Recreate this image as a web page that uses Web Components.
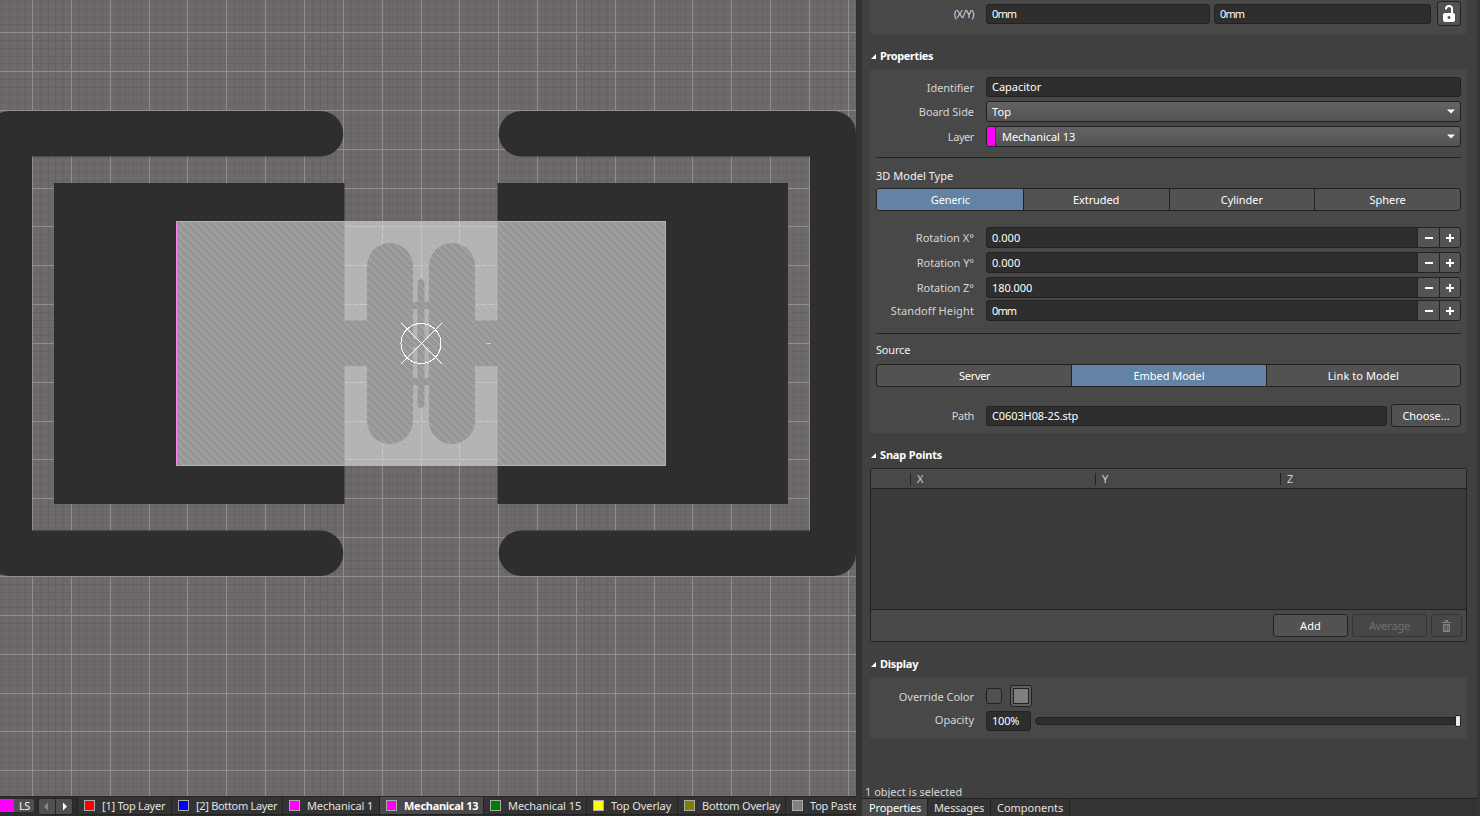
<!DOCTYPE html>
<html lang="en"><head><meta charset="utf-8"><title>PCB Library Editor</title>
<style>
html,body{margin:0;height:816px;overflow:hidden;background:#404040}
body{font:11px/14px "Noto Sans","Open Sans",sans-serif;color:#f2f2f2}
</style></head><body>
<eda-app>
  <pcb-canvas slot="canvas"></pcb-canvas>
  <layer-bar slot="layers">
    <layer-tab style="width:94px" color="#f00" w="63">[1] Top Layer</layer-tab>
    <layer-tab style="width:111px" color="#00f" w="81">[2] Bottom Layer</layer-tab>
    <layer-tab style="width:97px" color="#f0f" w="66">Mechanical 1</layer-tab>
    <layer-tab style="width:104px" color="#f0f" w="74" active>Mechanical 13</layer-tab>
    <layer-tab style="width:103px" color="#008000" w="73">Mechanical 15</layer-tab>
    <layer-tab style="width:91px" color="#ff0" w="60">Top Overlay</layer-tab>
    <layer-tab style="width:108px" color="#808000" w="78">Bottom Overlay</layer-tab>
    <layer-tab style="width:93px" color="#808080" w="48">Top Paste</layer-tab>
  </layer-bar>
  <props-panel slot="panel"></props-panel>
</eda-app>
<script>
const define=(name,html,init)=>customElements.define(name,class extends HTMLElement{
  connectedCallback(){
    if(this.shadowRoot)return;
    const root=this.attachShadow({mode:"open"}),t=document.createElement("template");
    t.innerHTML=typeof html==="function"?html(this):html;
    root.append(t.content.cloneNode(true));
    if(init)init(this,root);
  }
});
const a=(e,n,d="")=>e.getAttribute(n)??d;

define("eda-app",`<style>:host{display:grid;grid-template-columns:856px 624px;height:816px;overflow:hidden}
.left{display:flex;flex-direction:column;width:856px;overflow:hidden;min-width:0}</style>
<div class="left"><slot name="canvas"></slot><slot name="layers"></slot></div><slot name="panel"></slot>`);

/* label whose tracking is adjusted to a known advance width */
define("ui-text",`<style>:host{display:block;white-space:nowrap;line-height:14px}span{display:inline-block}:host([bold]){font-weight:700}</style><span><slot></slot></span>`,
(e,r)=>{const w=+a(e,"w",0);if(!w)return;const s=r.querySelector("span"),n=e.textContent.length,m=s.getBoundingClientRect().width;
 if(m>0)s.style.letterSpacing=((w+.2-m)/n).toFixed(3)+"px";});

define("pcb-canvas",()=>{
  let minor="",major="",hatch="",cross="";
  for(let k=-15;k<120;k++){
    const x=Math.round(32.1+38.84*k/5),y=Math.round(109.9+38.84*k/5),m=k%5===0;
    const p=(x>=0&&x<856?`M${x} 0h1v796h-1z`:"")+(y>=0&&y<796?`M0 ${y}h856v1H0z`:"");
    if(m)major+=p;else minor+=p;
  }
  for(let y=222;y<465;y++)for(let x=177+((y+7-177)%8+8)%8;x<665;x+=8)hatch+=`M${x} ${y}h1v1h-1z`;
  for(let i=0;i<=40;i++)cross+=`M${401+i} ${323+i}h1v1h-1zM${441-i} ${323+i}h1v1h-1z`;
  return `<style>:host{display:block;width:856px;height:796px;background:#6e6a69}svg{display:block}</style>
<svg width="856" height="796" viewBox="0 0 856 796">
<path fill="#656267" shape-rendering="crispEdges" d="${minor}"/><path fill="#918e8f" shape-rendering="crispEdges" d="${major}"/>
<g fill="#2e2e2e">
<path d="M9.500 111H320.500a22.500 22.500 0 0 1 0 45.500H32V530.500H320.500a22.500 22.500 0 0 1 0 45.500H9.500A22.500 22.500 0 0 1 -13 553.500V133.500A22.500 22.500 0 0 1 9.500 111z"/>
<path d="M833.500 111H521.500a22.500 22.500 0 0 0 0 45.500H810V530.500H521.500a22.500 22.500 0 0 0 0 45.500H833.500A22.500 22.500 0 0 0 856 553.500V133.500A22.500 22.500 0 0 0 833.500 111z"/>
<path d="M54 183H344.500V504H54zM497.500 183H788V504H497.500z"/>
<rect x="367" y="243" width="46" height="201" rx="23"/><rect x="429" y="243" width="46" height="201" rx="23"/>
<path d="M344 320.500h46v45.500h-46zM452 320.500h46v45.500h-46z"/>
<rect x="417.500" y="279" width="7" height="129" rx="3.500"/>
<path d="M412 302h18v7h-18zM412 339h18v8h-18zM412 378h18v7h-18z"/></g>
<path fill="#fff" fill-opacity=".5" d="M176 221h490v245H176z"/>
<path fill="#f77df7" shape-rendering="crispEdges" d="${hatch}"/>
<path fill="none" stroke="#ff7dff" d="M176.500 221.500h489v244h-489z"/>
<path fill="#d0d0d0" d="M486 343h5v1h-5z"/>
<path fill="#fff" shape-rendering="crispEdges" d="${cross}"/><circle cx="421" cy="343.500" r="20" fill="none" stroke="#fff" shape-rendering="crispEdges"/>
</svg>`});

define("layer-bar",`<style>:host{display:flex;height:20px;background:#2d2d2d;border-top:1px solid #262626;box-sizing:border-box;flex:none}
.sw{width:14px;height:13px;margin-top:2px;background:#f0f;flex:none}
.ls{width:20px;height:13px;margin-top:2px;padding-left:1px;box-sizing:border-box;background:#505050;border-radius:0 3px 3px 0;flex:none;display:flex;align-items:center;justify-content:center}
.ar{display:flex;flex:none;width:33px;height:15px;margin:1px 4px 0 4px;background:#505050;border:1px solid #262626;border-radius:3px}
svg{display:block}</style>
<div class="sw"></div><div class="ls"><ui-text w="11">LS</ui-text></div>
<div class="ar"><svg width="33" height="15"><path d="M9 3.500v8L5 7.500z" fill="#888"/><path d="M16 0h1v15h-1z" fill="#262626"/><path d="M24 3.500v8l4-4z" fill="#fff"/></svg></div><slot></slot>`);

define("layer-tab",e=>`<style>:host{display:flex;flex:none;height:18px;box-sizing:border-box;border-left:1px solid #222;border-bottom:1px solid #222;background:#333;padding-left:6px;color:#e2e2e2}
:host([active]){background:#4a4a4a;color:#fff}i{display:block;width:9px;height:9px;border:1px solid #aaa;margin:3px 7px 0 0;flex:none}
ui-text{margin-top:2px}</style><i style="background:${a(e,"color")}"></i><ui-text w="${a(e,"w")}" ${e.hasAttribute("active")?"bold":""}>${e.textContent}</ui-text>`);

define("ui-field",e=>`<style>:host{display:flex;align-items:center;box-sizing:border-box;height:20px;background:#2e2e2e;border:1px solid #222;border-radius:3px;padding-left:5px;flex:1;color:#fff}</style><ui-text w="${a(e,"w")}">${e.textContent}</ui-text>`);

define("ui-select",e=>`<style>:host{display:flex;align-items:center;box-sizing:border-box;height:21px;background:linear-gradient(#646464,#525252);border:1px solid #222;border-radius:3px;flex:1;overflow:hidden;color:#fff}
i{align-self:stretch;width:8px;background:#f0f;border-right:1px solid #222}ui-text{flex:1;margin-left:${e.hasAttribute("chip")?6:5}px}svg{margin-right:5px}</style>
${e.hasAttribute("chip")?"<i></i>":""}<ui-text w="${a(e,"w")}">${e.textContent}</ui-text><svg width="8" height="5"><path d="M0 .5h8L4 4.500z" fill="#fff"/></svg>`);

define("ui-spin",e=>`<style>:host{display:flex;box-sizing:border-box;height:21px;border:1px solid #222;border-radius:3px;background:#2e2e2e;flex:1;overflow:hidden;color:#fff}
ui-text{flex:1;padding:3px 0 0 5px}b{display:flex;align-items:center;justify-content:center;width:21px;border-left:1px solid #222;background:#545454}b+b{width:20px}</style>
<ui-text w="${a(e,"w")}">${e.textContent}</ui-text><b><svg width="8" height="8"><path d="M0 3h8v2H0z" fill="#fff"/></svg></b><b><svg width="8" height="8"><path d="M0 3h3V0h2v3h3v2H5v3H3V5H0z" fill="#fff"/></svg></b>`);

define("ui-button",`<style>:host{display:flex;align-items:center;justify-content:center;box-sizing:border-box;height:23px;border:1px solid #222;border-radius:3px;background:#525252;color:#fff;flex:none}
:host([off]){background:#474747;border-color:#353535;color:#707070}</style><slot></slot>`);

define("ui-segments",`<style>:host{display:flex;box-sizing:border-box;height:23px;border:1px solid #222;border-radius:3px;background:#525252;overflow:hidden;color:#fff}
::slotted(*){flex:1;text-align:center;padding-top:4px;border-left:1px solid #222}::slotted(:first-child){border-left:0;padding-left:1px}::slotted([on]){background:#6283a4}</style><slot></slot>`);

define("form-row",e=>`<style>:host{display:flex;align-items:flex-start}.l{width:98px;margin-right:12px;display:flex;justify-content:flex-end;flex:none;color:#d6d6d6;padding-top:${a(e,"dy","4")}px}</style>
<div class="l"><ui-text w="${a(e,"w")}">${a(e,"label")}</ui-text></div><slot></slot>`);

define("panel-heading",e=>`<style>:host{display:flex;align-items:center;height:14px;margin-left:9px;color:#fff}svg{margin-right:4px}</style><svg width="5" height="5"><path d="M5 0v5H0z" fill="#fff"/></svg><ui-text bold w="${a(e,"w")}">${e.textContent}</ui-text>`);

define("panel-box",`<style>:host{display:block;box-sizing:border-box;margin:0 10px 0 8px;padding:0 6px;background:#484848;border-radius:3px;overflow:hidden}</style><slot></slot>`);

define("snap-table",`<style>:host{display:flex;flex-direction:column;box-sizing:border-box;height:174px;margin:0 10px 0 8px;border:1px solid #222;border-radius:2px;background:#3a3a3a}
.h{display:flex;background:#484848;border-bottom:1px solid #222;border-top:1px solid #4e4e4e;height:18px;color:#d0d0d0}
.h div{flex:none;width:185px;display:flex;align-items:center}.h div:first-child{width:39px}.h div+div:before{content:"";width:1px;height:12px;background:#222;margin-right:6px}
.b{flex:1}.f{display:flex;justify-content:flex-end;align-items:center;gap:4px;height:31px;padding-right:4px;background:#484848;border-top:1px solid #222}</style>
<div class="h"><div></div><div><ui-text w="6">X</ui-text></div><div><ui-text w="5">Y</ui-text></div><div><ui-text w="6">Z</ui-text></div></div><div class="b"></div>
<div class="f"><ui-button style="width:75px"><ui-text w="21">Add</ui-text></ui-button><ui-button off style="width:75px"><ui-text w="41">Average</ui-text></ui-button>
<ui-button off style="width:31px"><svg width="9" height="12"><path fill="#858585" fill-rule="evenodd" d="M3 0h3v2h3v1H0V2h3zM4 1v1h1V1zM1 4h7v8H1zM2.500 5v5.500h1V5zM4.200 5v5.500h.8V5zM5.800 5v5.500h.8V5z"/></svg></ui-button></div>`);

define("opacity-slider",`<style>:host{display:flex;align-items:center;flex:1;height:12px;margin:4px 0 0 4px}
.t{flex:1;height:8px;box-sizing:border-box;background:#2e2e2e;border:1px solid #222;border-radius:4px 0 0 4px;display:flex;justify-content:space-evenly;align-items:flex-end;padding-left:5px}
.t i{width:2px;height:1px;background:#2b2b2b;margin-bottom:-2px}.k{width:6px;height:12px;box-sizing:border-box;background:#e8e8e8;border:1px solid #222;border-radius:2px;margin-left:-1px}</style><div class="t"><i></i><i></i><i></i></div><div class="k"></div>`);

define("dock-tabs",`<style>:host{display:flex;height:18px;box-sizing:border-box;border-top:1px solid #222;background:#333;color:#e2e2e2}
div{box-sizing:border-box;border-right:1px solid #222;display:flex;padding:2px 0 0 6px}.on{background:#4a4a4a;color:#fff;padding-left:7px}</style>
<div class="on" style="width:66px"><ui-text w="52">Properties</ui-text></div><div style="width:63px"><ui-text w="50">Messages</ui-text></div><div style="width:79px"><ui-text w="66">Components</ui-text></div>`);

define("props-panel",`<style>:host{display:flex;height:816px;overflow:hidden;background:#404040}
.g{width:6px;background:#333;flex:none}.r{width:3px;background:#353535;flex:none}.p{flex:1;display:flex;flex-direction:column;min-width:0}
.p>*{flex:none}hr{border:0;height:1px;background:#222;margin:0}.sw{box-sizing:border-box;width:16px;height:16px;border:1px solid #222;border-radius:3px;background:#505050;margin-top:3px}
.cs{box-sizing:border-box;width:22px;height:22px;border:1px solid #222;border-radius:3px;background:#606060;margin-left:8px;display:flex;align-items:center;justify-content:center}
.cs i{width:14px;height:14px;border:1px solid #222;background:#808080}</style>
<div class="g"></div><div class="p">
<panel-box style="height:34px;padding-top:1px"><form-row label="(X/Y)" w="20" dy="6">
 <ui-field w="24" style="margin-top:3px;flex:0 0 224px">0mm</ui-field><ui-field w="24" style="margin:3px 6px 0 4px">0mm</ui-field>
 <ui-button style="width:24px;height:25px"><svg width="14" height="18" viewBox="0 0 14 18"><path d="M4 4.500V4a3 3 0 0 1 6 0v5" fill="none" stroke="#fff" stroke-width="2"/><rect x="1" y="8" width="12" height="9" rx="2" fill="#fff"/><circle cx="7" cy="12.500" r="1.500" fill="#525252"/></svg></ui-button></form-row></panel-box>
<panel-heading w="53" style="margin-top:15px">Properties</panel-heading>
<panel-box style="height:364px;margin-top:6px;padding-top:8px">
 <form-row label="Identifier" w="47"><ui-field w="49">Capacitor</ui-field></form-row>
 <form-row label="Board Side" w="55" style="margin-top:4px"><ui-select w="19">Top</ui-select></form-row>
 <form-row label="Layer" w="26" style="margin-top:4px"><ui-select chip w="73">Mechanical 13</ui-select></form-row>
 <hr style="margin-top:10px"><ui-text w="77" style="margin:11px 0 5px">3D Model Type</ui-text>
 <ui-segments><ui-text on w="39">Generic</ui-text><ui-text w="46">Extruded</ui-text><ui-text w="42">Cylinder</ui-text><ui-text w="36">Sphere</ui-text></ui-segments>
 <form-row label="Rotation X°" w="58" style="margin-top:16px"><ui-spin w="28">0.000</ui-spin></form-row>
 <form-row label="Rotation Y°" w="57" style="margin-top:4px"><ui-spin w="28">0.000</ui-spin></form-row>
 <form-row label="Rotation Z°" w="57" style="margin-top:4px"><ui-spin w="40">180.000</ui-spin></form-row>
 <form-row label="Standoff Height" w="83" style="margin-top:2px"><ui-spin w="24">0mm</ui-spin></form-row>
 <hr style="margin-top:12px"><ui-text w="34" style="margin:9px 0 7px">Source</ui-text>
 <ui-segments><ui-text w="31">Server</ui-text><ui-text on w="71">Embed Model</ui-text><ui-text w="71">Link to Model</ui-text></ui-segments>
 <form-row label="Path" w="22" dy="5" style="margin-top:17px"><ui-field w="86" style="margin:2px 4px 0 0">C0603H08-2S.stp</ui-field><ui-button style="width:70px"><ui-text w="47">Choose...</ui-text></ui-button></form-row>
</panel-box>
<panel-heading w="62" style="margin-top:15px">Snap Points</panel-heading>
<snap-table style="margin-top:6px"></snap-table>
<panel-heading w="38" style="margin-top:15px">Display</panel-heading>
<panel-box style="height:62px;margin-top:6px;padding-top:8px">
 <form-row label="Override Color" w="75" dy="5"><div class="sw"></div><div class="cs"><i></i></div></form-row>
 <form-row label="Opacity" w="39" dy="2" style="margin-top:4px"><ui-field w="27" style="flex:0 0 45px">100%</ui-field><opacity-slider></opacity-slider></form-row>
</panel-box>
<ui-text w="97" style="margin:46px 0 0 3px;color:#d6d6d6;height:13px">1 object is selected</ui-text>
<dock-tabs></dock-tabs></div><div class="r"></div>`);
</script></body></html>
